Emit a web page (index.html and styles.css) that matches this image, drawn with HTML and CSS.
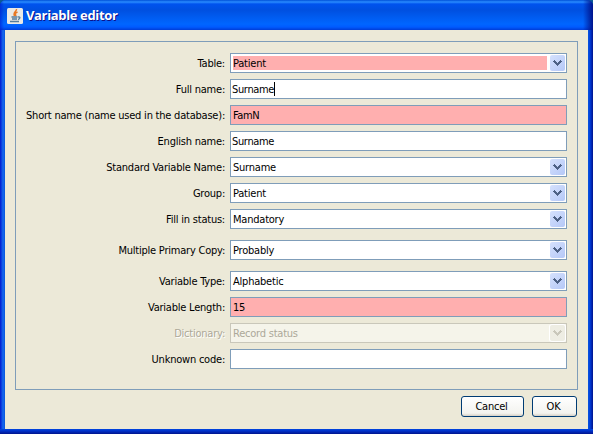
FILE: index.html
```html
<!DOCTYPE html>
<html lang="en">
<head>
<meta charset="utf-8">
<title>Variable editor</title>
<link rel="stylesheet" href="styles.css">
</head>
<body>
<svg width="0" height="0" class="defs"><defs>
<path id="chev" d="M4 5h1v1h1v1h1v1h1v-1h1v-1h1v-1h1v1h1v1h-1v1h-1v1h-1v1h-1v1h-1v-1h-1v-1h-1v-1h-1v-1h-1v-1h1z"/>
</defs></svg>
<div class="window">
  <header class="titlebar">
    <svg class="logo" viewBox="0 0 16 16"><rect width="16" height="16" rx="1.5" fill="#e9e9e6"/><path d="M9.500 1C10 3.500 5.500 4 7.500 8M10.500 4C8 5 8 6 9 8" fill="none" stroke="#e87824" stroke-width="1.500"/><path d="M4.500 9h6M5 11h5M3 13.500h9M11 9c3-.5 2 2 0 2.500" fill="none" stroke="#557c9c" stroke-width="1.300"/></svg>
    <h1>Variable editor</h1>
  </header>
  <main class="content">
    <form class="panel">
      <div class="row"><label>Table:</label><div class="field combo required"><span class="value">Patient</span><span class="arrow"><svg viewBox="0 0 15 16"><use href="#chev"/></svg></span></div></div>
      <div class="row"><label>Full name:</label><div class="field"><span class="value">Surname</span><i class="caret"></i></div></div>
      <div class="row"><label>Short name (name used in the database):</label><div class="field pink"><span class="value">FamN</span></div></div>
      <div class="row"><label>English name:</label><div class="field"><span class="value">Surname</span></div></div>
      <div class="row"><label>Standard Variable Name:</label><div class="field combo"><span class="value">Surname</span><span class="arrow"><svg viewBox="0 0 15 16"><use href="#chev"/></svg></span></div></div>
      <div class="row"><label>Group:</label><div class="field combo"><span class="value">Patient</span><span class="arrow"><svg viewBox="0 0 15 16"><use href="#chev"/></svg></span></div></div>
      <div class="row"><label>Fill in status:</label><div class="field combo"><span class="value">Mandatory</span><span class="arrow"><svg viewBox="0 0 15 16"><use href="#chev"/></svg></span></div></div>
      <div class="row spaced"><label>Multiple Primary Copy:</label><div class="field combo"><span class="value">Probably</span><span class="arrow"><svg viewBox="0 0 15 16"><use href="#chev"/></svg></span></div></div>
      <div class="row spaced"><label>Variable Type:</label><div class="field combo"><span class="value">Alphabetic</span><span class="arrow"><svg viewBox="0 0 15 16"><use href="#chev"/></svg></span></div></div>
      <div class="row"><label>Variable Length:</label><div class="field pink"><span class="value">15</span></div></div>
      <div class="row disabled"><label>Dictionary:</label><div class="field combo"><span class="value">Record status</span><span class="arrow"><svg viewBox="0 0 15 16"><use href="#chev"/></svg></span></div></div>
      <div class="row"><label>Unknown code:</label><div class="field"></div></div>
    </form>
    <footer class="actions"><button class="cancel">Cancel</button><button class="ok">OK</button></footer>
  </main>
</div>
</body>
</html>
```
FILE: styles.css
```css
* { box-sizing: border-box; }
body { margin: 0; background: #0a5a96; font: 11px/14px "DejaVu Sans Condensed", "DejaVu Sans", sans-serif; font-stretch: condensed; letter-spacing: -0.22px; color: #000; }
.defs { position: absolute; }
.window { width: 593px; height: 434px; padding: 0 5px 5px; display: flex; flex-direction: column; border-radius: 6px 6px 0 0;
  background: linear-gradient(transparent 429px, #0046e0 429px, #0030c8 431px, #00138c 434px),
    linear-gradient(90deg, #0019cf 0, #0831d9 1px, #166aee 3px, #0855dd 5px, #0855dd 588px, #003ddc 590px, #00138c 593px); }
.titlebar { height: 30px; margin: 0 -5px; padding: 2px 0 0 7px; display: flex; align-items: center; gap: 3px; border-radius: 6px 6px 0 0;
  background: linear-gradient(90deg, #0019cf99 0, transparent 4px, transparent 583px, #00138c 593px),
    linear-gradient(#0050d8 0, #2a8cff 2px, #0053ee 4px, #0050e0 10px, #0066ff 24px, #005bff 27px, #003dd7 30px); }
.logo { width: 16px; height: 16px; }
h1 { margin: -2px 0 0; font: bold 13px/16px "Open Sans", sans-serif; letter-spacing: -0.35px; color: #fff; text-shadow: 1px 1px #0f1089; }
.content { flex: 1; padding: 11px 10px 0; background: #ece9d8; }
.panel { height: 349px; border: 1px solid #7f9db9; padding: 11px 10px 0 9px; display: flex; flex-direction: column; gap: 6px; }
.row { display: flex; gap: 5px; height: 20px; align-items: center; }
.spaced { margin-top: 5px; }
label { flex: 1; text-align: right; white-space: nowrap; padding-top: 1px; }
.field { width: 337px; height: 20px; border: 1px solid #7f9db9; background: #fff; display: flex; align-items: center; padding-left: 1px; }
.value { padding-top: 1px; }
.field:not(.combo) .value { letter-spacing: -0.35px; }
.pink { background: #ffafaf; }
.pink .value { padding-left: 1px; }
.combo { padding: 1px; }
.combo .value { flex: 1; padding-left: 1px; }
.required .value { background: #ffafaf; height: 14px; margin: 0 3px 0 1px; padding-left: 0; line-height: 14px; }
.arrow { width: 15px; height: 16px; border-radius: 2px; background: linear-gradient(135deg, #d5e1fd, #b5c8f7); }
.arrow svg { display: block; width: 15px; height: 16px; fill: #4d6185; shape-rendering: crispEdges; }
.caret { width: 1px; height: 14px; background: #000; }
.disabled label { text-shadow: 1px 1px #fff; }
.disabled { color: #aca899; }
.disabled .field { border-color: #c9c7ba; background: #f5f4ea; }
.disabled .arrow { background: #eeede3; box-shadow: 0 0 0 1px #fff; }
.disabled .arrow svg { fill: #c9c7ba; }
.actions { display: flex; justify-content: flex-end; gap: 8px; padding: 6px 1px 0 0; }
button { height: 21px; padding: 0 2px 0 0; border: 1px solid #003c74; border-radius: 3px; font: inherit; letter-spacing: inherit; color: #000; background: linear-gradient(#fff, #f3f3ef 85%, #d6d0c5); }
.cancel { width: 63px; }
.ok { width: 45px; }
```
